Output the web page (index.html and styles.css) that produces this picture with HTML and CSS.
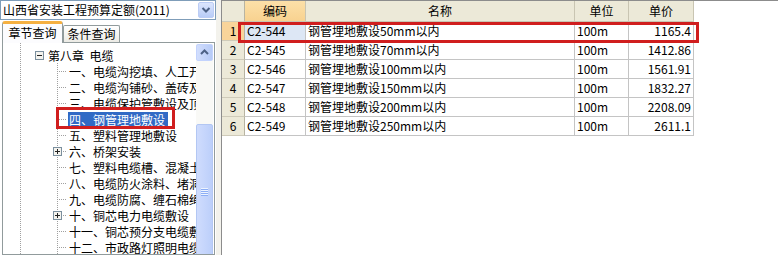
FILE: index.html
```html
<!DOCTYPE html>
<html lang="zh-CN">
<head>
<meta charset="utf-8">
<title>定额查询</title>
<link rel="stylesheet" href="styles.css">
</head>
<body>
<div class="app">
  <div class="left">
    <div class="combo">
      <span class="combo-text">山西省安装工程预算定额(2011)</span>
      <span class="combo-btn"><svg width="14" height="14" viewBox="0 0 14 14"><polyline points="3.5,5 7,8.5 10.5,5" fill="none" stroke="#4d6185" stroke-width="2"/></svg></span>
    </div>
    <div class="tabs">
      <div class="tab active">章节查询</div>
      <div class="tab inactive">条件查询</div>
    </div>
    <div class="treebox">
      <div class="tree">
        <div class="node chapter">
          <svg class="exp" width="9" height="9" viewBox="0 0 9 9"><rect x="0.5" y="0.5" width="8" height="8" fill="#f4f3ee" stroke="#7b8f9e"/><path d="M2 4.5h5" stroke="#222" stroke-width="1"/></svg>
          <span class="label">第八章&nbsp;&nbsp;电缆</span>
        </div>
        <div class="children">
          <div class="node child"><span class="joint"></span><span class="label">一、电缆沟挖填、人工开挖路面</span></div>
          <div class="node child"><span class="joint"></span><span class="label">二、电缆沟铺砂、盖砖及移动盖板</span></div>
          <div class="node child"><span class="joint"></span><span class="label">三、电缆保护管敷设及顶管</span></div>
          <div class="node child"><span class="joint"></span><span class="label selected">四、钢管理地敷设</span></div>
          <div class="node child"><span class="joint"></span><span class="label">五、塑料管理地敷设</span></div>
          <div class="node child"><span class="joint"><svg class="exp" width="9" height="9" viewBox="0 0 9 9"><rect x="0.5" y="0.5" width="8" height="8" fill="#f4f3ee" stroke="#7b8f9e"/><path d="M2 4.5h5M4.5 2v5" stroke="#222" stroke-width="1"/></svg></span><span class="label">六、桥架安装</span></div>
          <div class="node child"><span class="joint"></span><span class="label">七、塑料电缆槽、混凝土电缆槽安装</span></div>
          <div class="node child"><span class="joint"></span><span class="label">八、电缆防火涂料、堵洞、隔板安装</span></div>
          <div class="node child"><span class="joint"></span><span class="label">九、电缆防腐、缠石棉绳、刷漆</span></div>
          <div class="node child"><span class="joint"><svg class="exp" width="9" height="9" viewBox="0 0 9 9"><rect x="0.5" y="0.5" width="8" height="8" fill="#f4f3ee" stroke="#7b8f9e"/><path d="M2 4.5h5M4.5 2v5" stroke="#222" stroke-width="1"/></svg></span><span class="label">十、铜芯电力电缆敷设</span></div>
          <div class="node child"><span class="joint"></span><span class="label">十一、铜芯预分支电缆敷设</span></div>
          <div class="node child"><span class="joint"></span><span class="label">十二、市政路灯照明电缆敷设</span></div>
        </div>
      </div>
      <div class="vscroll">
        <div class="sb-btn"><svg width="13" height="13" viewBox="0 0 13 13"><polyline points="3,8 6.5,4.5 10,8" fill="none" stroke="#4d6185" stroke-width="2"/></svg></div>
        <div class="sb-track">
          <div class="sb-thumb"><span class="grip"></span></div>
        </div>
      </div>
      <div class="mark tree-mark"></div>
    </div>
  </div>
  <div class="splitter"></div>
  <div class="right">
    <div class="grid">
      <div class="hd rn"></div>
      <div class="hd hd-active">编码</div>
      <div class="hd">名称</div>
      <div class="hd">单位</div>
      <div class="hd">单价</div>

      <div class="rn rn-active">1</div>
      <div class="cell sel">C2-544</div>
      <div class="cell">钢管埋地敷设50mm以内</div>
      <div class="cell">100m</div>
      <div class="cell num">1165.4</div>

      <div class="rn">2</div>
      <div class="cell">C2-545</div>
      <div class="cell">钢管埋地敷设70mm以内</div>
      <div class="cell">100m</div>
      <div class="cell num">1412.86</div>

      <div class="rn">3</div>
      <div class="cell">C2-546</div>
      <div class="cell">钢管埋地敷设100mm以内</div>
      <div class="cell">100m</div>
      <div class="cell num">1561.91</div>

      <div class="rn">4</div>
      <div class="cell">C2-547</div>
      <div class="cell">钢管埋地敷设150mm以内</div>
      <div class="cell">100m</div>
      <div class="cell num">1832.27</div>

      <div class="rn">5</div>
      <div class="cell">C2-548</div>
      <div class="cell">钢管埋地敷设200mm以内</div>
      <div class="cell">100m</div>
      <div class="cell num">2208.09</div>

      <div class="rn">6</div>
      <div class="cell">C2-549</div>
      <div class="cell">钢管埋地敷设250mm以内</div>
      <div class="cell">100m</div>
      <div class="cell num">2611.1</div>
    </div>
    <div class="mark grid-mark"></div>
  </div>
</div>
</body>
</html>
```

FILE: styles.css
```css
html, body {
  margin: 0;
  padding: 0;
  background: #ffffff;
}
body {
  font-family: "Noto Sans CJK SC", "Noto Sans", sans-serif;
  font-size: 12px;
  line-height: 16px;
  color: #000;
}
.app {
  display: flex;
  width: 778px;
  height: 255px;
  overflow: hidden;
  background: #ffffff;
}

/* ---------- left panel ---------- */
.left {
  width: 216px;
  flex: none;
  display: flex;
  flex-direction: column;
  min-height: 0;
}
.combo {
  height: 20px;
  flex: none;
  box-sizing: border-box;
  border: 1px solid #7f9db9;
  display: flex;
  align-items: center;
  justify-content: space-between;
  padding-left: 2px;
  background: #fff;
}
.combo-text {
  white-space: nowrap;
  line-height: 16px;
}
.combo-btn {
  width: 16px;
  height: 16px;
  margin-right: 1px;
  box-sizing: border-box;
  border: 1px solid #bccdf5;
  border-radius: 2px;
  background: linear-gradient(to bottom, #dbe5fd, #b8ccf7);
  display: flex;
  align-items: center;
  justify-content: center;
}
.tabs {
  height: 23px;
  flex: none;
  margin-bottom: -1px;
  display: flex;
  align-items: flex-end;
  padding-left: 2px;
  z-index: 1;
}
.tab {
  box-sizing: border-box;
  border: 1px solid #919b9c;
  border-bottom: none;
  text-align: center;
  white-space: nowrap;
}
.tab.active {
  width: 61px;
  height: 22px;
  background: #fcfcfe;
  border-top: 3px solid #f5b041;
  border-radius: 3px 3px 0 0;
  line-height: 17px;
}
.tab.inactive {
  width: 57px;
  height: 17px;
  margin-bottom: 1px;
  background: linear-gradient(to bottom, #ffffff, #ecebe5);
  border-radius: 2px 2px 0 0;
  line-height: 15px;
}
.treebox {
  flex: 1;
  min-height: 0;
  margin: 0 1px 0 2px;
  border: 1px solid #919b9c;
  display: flex;
  position: relative;
  background: #fff;
}
.tree {
  width: 193px;
  flex: none;
  overflow: hidden;
  padding-top: 4px;
  background-image: repeating-linear-gradient(to bottom, #a0a0a0 0 1px, transparent 1px 2px);
  background-size: 1px 100%;
  background-repeat: no-repeat;
  background-position: 17px 0;
}
.children {
  background-image: repeating-linear-gradient(to bottom, #a0a0a0 0 1px, transparent 1px 2px);
  background-size: 1px 100%;
  background-repeat: no-repeat;
  background-position: 54px 0;
}
.node {
  height: 16px;
  display: flex;
  align-items: center;
  white-space: nowrap;
}
.exp {
  flex: none;
  display: block;
}
.chapter .exp {
  margin-left: 32px;
}
.chapter .label {
  margin-left: 3px;
}
.child {
  padding-left: 50px;
}
.joint {
  width: 15px;
  height: 16px;
  flex: none;
  display: flex;
  align-items: center;
  background-image: repeating-linear-gradient(to right, #a0a0a0 0 1px, transparent 1px 2px);
  background-size: 9px 1px;
  background-repeat: no-repeat;
  background-position: 4px 50%;
}
.label {
  padding: 0 3px 0 1px;
  line-height: 15px;
  height: 15px;
}
.label.selected {
  background: #316ac5;
  color: #fff;
}

/* scrollbar */
.vscroll {
  width: 17px;
  flex: none;
  margin-top: 1px;
  display: flex;
  flex-direction: column;
  background: #f7f7f3;
}
.sb-btn {
  height: 17px;
  flex: none;
  box-sizing: border-box;
  border: 1px solid #c3d3fd;
  border-radius: 2px;
  background: linear-gradient(to right, #d2defd, #b6caf6);
  display: flex;
  align-items: center;
  justify-content: center;
}
.sb-track {
  flex: 1;
  min-height: 0;
  overflow: hidden;
  display: flex;
  flex-direction: column;
  background: #f9f9f6;
}
.sb-thumb {
  margin-top: 63px;
  height: 136px;
  flex: none;
  box-sizing: border-box;
  border: 1px solid #b3c7f3;
  border-radius: 2px;
  background: linear-gradient(to right, #cfdcfd, #bccffa);
  display: flex;
  align-items: center;
  justify-content: center;
}
.grip {
  width: 7px;
  height: 8px;
  background: repeating-linear-gradient(to bottom, #eef4fe 0 1px, #8caef5 1px 2px);
}

.splitter {
  width: 5px;
  flex: none;
  background: #f3f2ec;
}

/* ---------- right grid ---------- */
.right {
  flex: 1;
  position: relative;
  border-top: 1px solid #8c8c8c;
  border-left: 1px solid #8c8c8c;
  background: #fff;
}
.grid {
  display: grid;
  grid-template-columns: 23px 61px 269px 54px 65px;
  grid-template-rows: 21px repeat(6, 19px);
  width: 472px;
}
.grid > div {
  box-sizing: border-box;
  border-right: 1px solid #c4c4c4;
  border-bottom: 1px solid #c4c4c4;
  white-space: nowrap;
  overflow: hidden;
  padding: 0 2px;
  line-height: 18px;
}
.grid > .hd {
  background: #ece9d8;
  text-align: center;
  line-height: 20px;
  border-right-color: #c9c5b2;
  border-bottom-color: #c9c5b2;
}
.grid > .hd-active {
  background: linear-gradient(to bottom, #fce0a8, #f8d290);
}
.grid > .rn {
  background: #ece9d8;
  text-align: center;
  border-right-color: #b8b4a2;
  border-bottom-color: #cfcbba;
}
.grid > .rn-active {
  background: #f9d49a;
}
.grid > .sel {
  background: #dde7f5;
}
.grid > .num {
  text-align: right;
}

/* annotation overlays */
.mark {
  position: absolute;
  box-sizing: border-box;
  border: 3px solid #d01e1e;
  pointer-events: none;
}
.grid-mark {
  left: 16px;
  top: 21px;
  width: 461px;
  height: 21px;
}
.tree-mark {
  left: 53px;
  top: 64px;
  width: 119px;
  height: 22px;
}
```
